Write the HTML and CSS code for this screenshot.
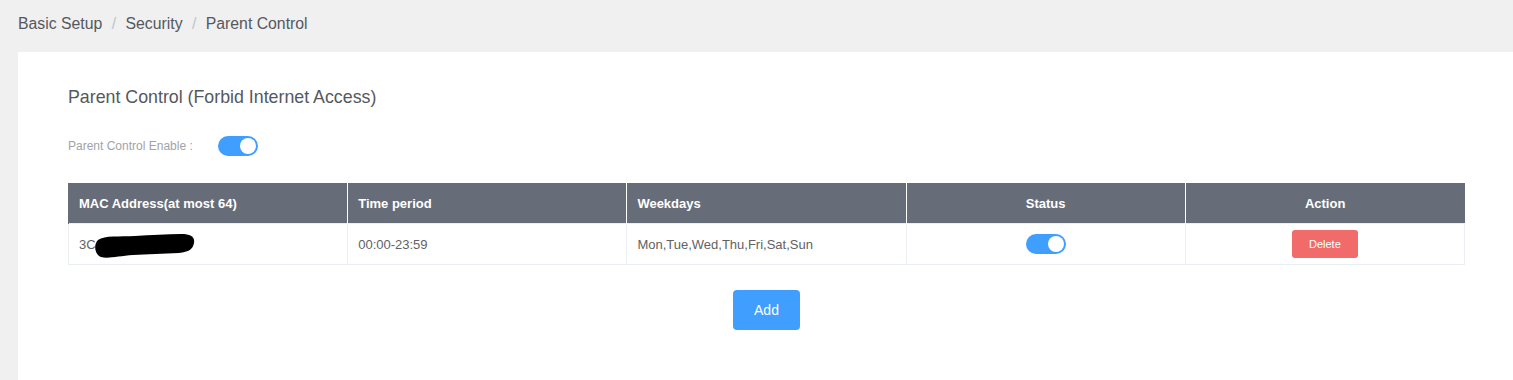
FILE: index.html
```html
<!DOCTYPE html>
<html lang="en">
  <head>
    <meta charset="UTF-8" />
    <title>Parent Control</title>
    <link rel="stylesheet" href="styles.css">
  </head>
  <body>
    <!-- Breadcrumb -->
    <div class="breadcrumb">
      <span class="crumb">Basic Setup</span>
      <span class="sep">/</span>
      <span class="crumb">Security</span>
      <span class="sep">/</span>
      <span class="crumb">Parent Control</span>
    </div>

    <div class="card">
      <h3 class="card-title">Parent Control (Forbid Internet Access)</h3>

      <div class="form-row">
        <label class="form-label">Parent Control Enable :</label>
        <span class="switch on"><span class="knob"></span></span>
      </div>

      <table class="rules">
        <thead>
          <tr>
            <th>MAC Address(at most 64)</th>
            <th>Time period</th>
            <th>Weekdays</th>
            <th class="center">Status</th>
            <th class="center">Action</th>
          </tr>
        </thead>
        <tbody>
          <tr>
            <td>
              <span class="mac">3C<svg class="redact" width="102" height="26" viewBox="0 0 102 26">
                <path d="M5 7 C12 2 26 4 42 3 C58 2 74 1 88 1 C98 1 102 4 101 10 C100 16 96 19 86 20 C70 21 54 21 40 22 C26 23 15 26 8 24 C2 22 0 12 5 7 Z" fill="#000"/>
              </svg></span>
            </td>
            <td>00:00-23:59</td>
            <td>Mon,Tue,Wed,Thu,Fri,Sat,Sun</td>
            <td class="center"><span class="switch on"><span class="knob"></span></span></td>
            <td class="center"><button class="delete-button">Delete</button></td>
          </tr>
        </tbody>
      </table>

      <div class="actions">
        <button class="add-button">Add</button>
      </div>
    </div>
  </body>
</html>
```

FILE: styles.css
```css
body {
  margin: 0;
  background-color: #f0f0f0;
  font-family: "Liberation Sans", Arial, sans-serif;
  color: #606266;
  height: 380px;
  overflow: hidden;
}

.breadcrumb {
  padding: 15px 18px 0;
  height: 52px;
  box-sizing: border-box;
  font-size: 15.8px;
  color: #55585e;
}

.sep {
  color: #c0c4cc;
  margin: 0 5px;
}

.card {
  box-sizing: border-box;
  background-color: white;
  margin-left: 18px;
  padding: 35px 48px 0 50px;
  height: 328px;
}

.card-title {
  margin: 0;
  font-size: 17.8px;
  font-weight: normal;
  color: #55585e;
}

.form-row {
  display: flex;
  align-items: center;
  margin-top: 28px;
  height: 20px;
}

.form-label {
  font-size: 12px;
  color: #a0a3a8;
  width: 150px;
}

/* Toggle switch */
.switch {
  display: inline-block;
  position: relative;
  width: 40px;
  height: 20px;
  border-radius: 10px;
  background-color: #dcdfe6;
  vertical-align: middle;
}

.switch.on {
  background-color: #409eff;
}

.knob {
  position: absolute;
  top: 2px;
  left: 2px;
  width: 16px;
  height: 16px;
  border-radius: 50%;
  background-color: white;
}

.switch.on .knob {
  left: 22px;
}

/* Table */
.rules {
  width: 1397px;
  margin-top: 27px;
  border-collapse: collapse;
  table-layout: fixed;
  font-size: 13px;
}

.rules th {
  background-color: #676d78;
  color: white;
  font-weight: bold;
  text-align: left;
  height: 40px;
  padding: 0 10px;
  border-left: 1px solid white;
}

.rules th:first-child {
  border-left: 1px solid #676d78;
}

.rules td {
  height: 40px;
  padding: 0 10px;
  border: 1px solid #ebeef5;
  color: #606266;
}

.rules .center {
  text-align: center;
}

.mac {
  display: inline-flex;
  align-items: center;
  vertical-align: middle;
}

.redact {
  margin-left: -3px;
  margin-top: 4px;
}

.delete-button {
  background-color: #f26b6b;
  color: white;
  border: none;
  border-radius: 3px;
  width: 66px;
  height: 28px;
  font-size: 11px;
  font-family: inherit;
  cursor: pointer;
  vertical-align: middle;
}

.actions {
  display: flex;
  justify-content: center;
  margin-top: 25px;
  width: 1397px;
}

.add-button {
  background-color: #409eff;
  color: white;
  border: none;
  border-radius: 4px;
  width: 67px;
  height: 40px;
  font-size: 14px;
  font-family: inherit;
  cursor: pointer;
}
```
